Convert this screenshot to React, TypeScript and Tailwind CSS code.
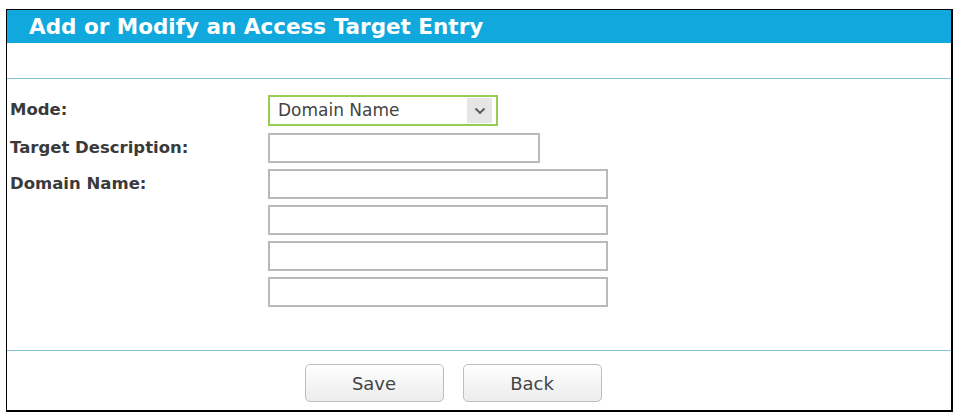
import React from 'react';

const font = { fontFamily: '"DejaVu Sans", Verdana, sans-serif' };

const TextBox: React.FC<{ wide?: boolean }> = ({ wide }) => (
  <input
    type="text"
    className={`${wide ? 'w-[340px]' : 'w-[272px]'} h-[30px] border-2 border-[#b9b9b9] bg-white outline-none`}
  />
);

const App: React.FC = () => {
  return (
    <div className="w-[954px] h-[415px] bg-white pt-[9px] pl-[6px]" style={font}>
      <div className="w-[947px] h-[403px] border-l border-t border-r-2 border-b-2 border-black flex flex-col">
        <div className="h-[33px] bg-[#10a8dd] flex items-center pl-[22px]">
          <h1 className="text-white font-bold text-[21.5px] leading-none">Add or Modify an Access Target Entry</h1>
        </div>

        <div className="h-[36px] border-b border-[#7fc3de]" />

        <div className="flex pt-[16px] pl-[3px]">
          <div className="w-[258px] flex flex-col text-[16.5px] font-bold text-[#3a3a3a]">
            <div className="h-[31px] flex items-center">Mode:</div>
            <div className="h-[30px] mt-[7px] flex items-center">Target Description:</div>
            <div className="h-[30px] mt-[6px] flex items-center">Domain Name:</div>
          </div>

          <div className="flex flex-col gap-[6px]">
            <div className="w-[230px] h-[31px] border-2 border-[#98cd55] flex items-center justify-between pl-[8px] pr-[4px] mb-[1px]">
              <span className="text-[17px] text-[#444]">Domain Name</span>
              <span className="w-[25px] h-[25px] bg-[#e6e6e6] flex items-center justify-center">
                <svg width="12" height="8" viewBox="0 0 12 8">
                  <path d="M1.5 1.5 L6 6 L10.5 1.5" fill="none" stroke="#555" strokeWidth="1.8" />
                </svg>
              </span>
            </div>
            <TextBox />
            <TextBox wide />
            <TextBox wide />
            <TextBox wide />
            <TextBox wide />
          </div>
        </div>

        <div className="flex-1" />

        <div className="border-t border-[#7fc3de] flex justify-center gap-[19px] pt-[13px] pb-[8px] pr-[52px]">
          <button className="w-[139px] h-[38px] rounded-[5px] border border-[#bdbdbd] bg-gradient-to-b from-white to-[#ececec] text-[18px] text-[#444]">
            Save
          </button>
          <button className="w-[139px] h-[38px] rounded-[5px] border border-[#bdbdbd] bg-gradient-to-b from-white to-[#ececec] text-[18px] text-[#444]">
            Back
          </button>
        </div>
      </div>
    </div>
  );
};

export default App;
